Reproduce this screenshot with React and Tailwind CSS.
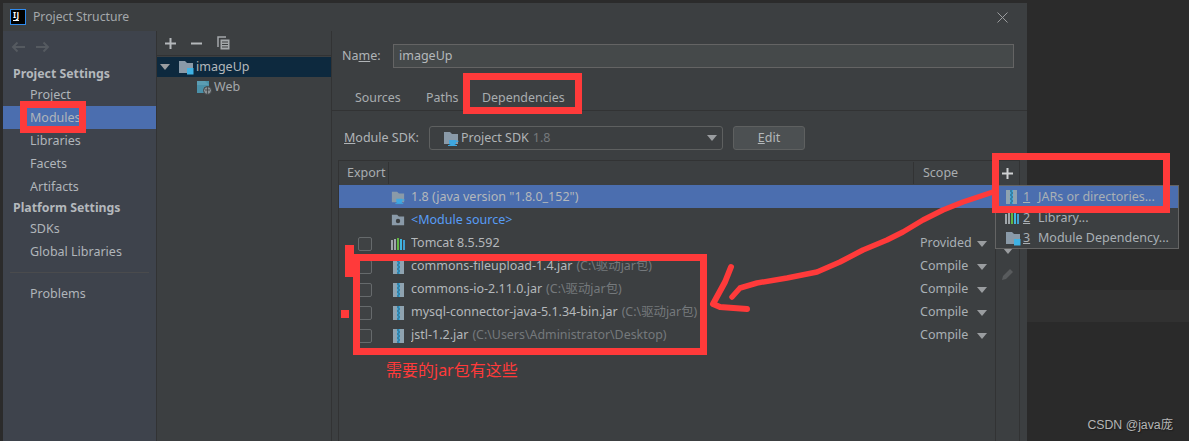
const FONT = "font-['Noto_Sans','Noto_Sans_CJK_SC',sans-serif]";

function FolderIcon({ className = "", badge }) {
  return (
    <svg width="16" height="15" viewBox="0 0 16 15" className={className}>
      <path d="M1 1h6l2 2h6v10H1z" fill="#8a9aa8" />
      {badge === "square" && <rect x="9" y="8" width="6.5" height="6.5" fill="#3fb2e4" />}
      {badge === "cup" && (
        <g fill="#3fa7e0">
          <path d="M6 9h7v3.2a1.8 1.8 0 0 1-1.8 1.8H7.8A1.8 1.8 0 0 1 6 12.2z" />
          <rect x="13" y="9.6" width="2.4" height="1.4" />
          <rect x="5" y="14" width="9" height="1" />
        </g>
      )}
      {badge === "dot" && <circle cx="8" cy="8" r="2.5" fill="#3c3f41" />}
    </svg>
  );
}

function WebIcon() {
  return (
    <svg width="15" height="15" viewBox="0 0 15 15" className="shrink-0">
      <path d="M0 1h12v12H0z" fill="#4a90a8" />
      <path d="M0 1h8l4 4H0z" fill="#5b9db3" />
      <circle cx="10.5" cy="10.5" r="4" fill="#8a9195" stroke="#3c3f41" />
      <path d="M8 10h5M10.5 7v7" stroke="#3c3f41" strokeWidth="0.8" />
    </svg>
  );
}

function JarIcon() {
  return (
    <svg width="13" height="14" viewBox="0 0 13 14" className="shrink-0">
      <rect x="1" y="0" width="4" height="14" fill="#8fa3b0" />
      <rect x="8" y="0" width="4" height="14" fill="#8fa3b0" />
      <rect x="5" y="0" width="3" height="14" fill="#3fa5d6" />
      <path d="M5 1h2M6 3h2M5 5h2M6 7h2M5 9h2M6 11h2M5 13h2" stroke="#2b5f7a" strokeWidth="1" />
    </svg>
  );
}

function LibIcon() {
  return (
    <svg width="14" height="14" viewBox="0 0 14 14" className="shrink-0">
      <rect x="0" y="3" width="2" height="10" fill="#a0a6aa" />
      <rect x="3" y="2" width="2" height="11" fill="#a0a6aa" />
      <rect x="6" y="1" width="2" height="12" fill="#62b543" />
      <rect x="9" y="2" width="2" height="11" fill="#40b6e0" />
      <rect x="12" y="3" width="2" height="10" fill="#40a0d0" />
    </svg>
  );
}

function Caret({ className = "" }) {
  return (
    <svg width="10" height="6" viewBox="0 0 10 6" className={className}>
      <path d="M0 0h10L5 6z" fill="#9a9da0" />
    </svg>
  );
}

function NavItem({ children, active }) {
  return (
    <div className={`h-[23px] flex items-center pl-[27px] pt-[2px] text-[12.5px] text-[#b0b5ba] ${active ? "bg-[#4b6eaf]" : ""}`}>
      {children}
    </div>
  );
}

function NavHead({ children, h }) {
  return (
    <div className={`${h} flex items-center pl-[10px] pt-[2px] text-[12.3px] font-bold text-[#b4b8bc]`}>{children}</div>
  );
}

function Row({ icon, name, path, scope, check = true, selected, nameClass = "text-[#b4b8bb]" }) {
  return (
    <div className={`h-[23px] pt-[2px] flex items-center text-[12.5px] ${selected ? "bg-[#4b6eaf]" : ""}`}>
      <div className="w-[19px] shrink-0" />
      <div className="w-[14px] shrink-0">
        {check && <div className="w-[14px] h-[14px] rounded-[2px] border border-[#666a6c] bg-[#3f4244]" />}
      </div>
      <div className="w-[19px] shrink-0" />
      <div className="w-[14px] shrink-0 flex justify-center">{icon}</div>
      <div className="flex-1 ml-[6px] whitespace-nowrap overflow-hidden">
        <span className={nameClass}>{name}</span>
        {path && <span className="text-[#75797c] ml-[4px] text-[12.4px]">{path}</span>}
      </div>
      <div className="w-[75px] shrink-0 flex items-center text-[#a9b0b5]">
        {scope && (
          <>
            <span className="w-[57px]">{scope}</span>
            <Caret />
          </>
        )}
      </div>
    </div>
  );
}

function MenuRow({ n, label, icon, selected }) {
  return (
    <div className={`flex items-center text-[12.5px] text-[#a9b0b5] ${selected ? "bg-[#4b6eaf] h-[22px]" : "h-[20.5px]"}`}>
      <div className="w-[27px] shrink-0 pl-[9px] flex">{icon}</div>
      <span className="underline w-[15px] shrink-0">{n}</span>
      <span className="whitespace-nowrap">{label}</span>
    </div>
  );
}

function RedBox({ className }) {
  return <div className={`absolute border-[7px] border-[#ff3a3a] ${className}`} />;
}

export default function App() {
  return (
    <div className={`relative w-[1189px] h-[441px] overflow-hidden bg-[#2b2b2b] flex ${FONT}`}>
      {/* Dialog */}
      <div className="ml-[3px] mt-[3px] w-[1024px] h-[438px] flex flex-col bg-[#3c3f41]">
        {/* Title bar */}
        <div className="h-[28px] shrink-0 flex items-center pl-[7px] pr-[19px]">
          <div className="w-[16px] h-[16px] bg-black border border-[#2f8bef] flex flex-col items-start pt-[1px] pl-[2px] leading-none shrink-0">
            <span className="text-white text-[8px] font-bold leading-[8px] tracking-[0.5px]">IJ</span>
            <span className="w-[6px] h-[1px] bg-white mt-[1px]" />
          </div>
          <span className="ml-[7px] text-[12.2px] text-[#a4a8ab]">Project Structure</span>
          <svg width="11" height="11" viewBox="0 0 11 11" className="ml-auto">
            <path d="M0.5 0.5l10 10M10.5 0.5l-10 10" stroke="#9b9d9f" strokeWidth="1" />
          </svg>
        </div>

        <div className="flex-1 flex min-h-0">
          {/* Sidebar */}
          <div className="w-[153px] shrink-0 bg-[#3e434c] border-r border-[#323334] box-content">
            <div className="h-[32px] flex items-center pl-[8px] gap-[11px]">
              <svg width="14" height="12" viewBox="0 0 14 12"><path d="M14 6H2M6.5 1.5L2 6l4.500 4.500" fill="none" stroke="#555a60" strokeWidth="2" /></svg>
              <svg width="14" height="12" viewBox="0 0 14 12"><path d="M0 6h12M7.500 1.500L12 6l-4.500 4.500" fill="none" stroke="#555a60" strokeWidth="2" /></svg>
            </div>
            <NavHead h="h-[20px]">Project Settings</NavHead>
            <NavItem>Project</NavItem>
            <NavItem active>Modules</NavItem>
            <NavItem>Libraries</NavItem>
            <NavItem>Facets</NavItem>
            <NavItem>Artifacts</NavItem>
            <NavHead h="h-[19px]">Platform Settings</NavHead>
            <NavItem>SDKs</NavItem>
            <NavItem>Global Libraries</NavItem>
            <div className="mt-[9px] mb-[9px] mx-[7px] h-px bg-[#4a4b4d]" />
            <NavItem>Problems</NavItem>
          </div>

          {/* Modules tree */}
          <div className="w-[174px] shrink-0 border-r border-[#323334] box-content">
            <div className="h-[24px] flex items-center pl-[8px] border-b border-[#323334] box-content">
              <svg width="11" height="11" viewBox="0 0 11 11"><path d="M5.500 0v11M0 5.500h11" stroke="#b4b8bb" strokeWidth="2" /></svg>
              <svg width="11" height="11" viewBox="0 0 11 11" className="ml-[15px]"><path d="M0 5.500h11" stroke="#b4b8bb" strokeWidth="2" /></svg>
              <svg width="13" height="14" viewBox="0 0 13 14" className="ml-[15px]">
                <path d="M1 11V1h8" fill="none" stroke="#a4a8ab" strokeWidth="1.500" />
                <rect x="3.500" y="3.500" width="9" height="10" fill="#a4a8ab" />
                <path d="M5 6h6M5 8.500h6M5 11h6" stroke="#3c3f41" strokeWidth="1" />
              </svg>
            </div>
            <div className="mt-[1px] h-[20px] bg-[#0d293e] flex items-center text-[12.5px] text-[#b4b8bb]">
              <Caret className="ml-[3px] w-[10px]" />
              <FolderIcon badge="square" className="ml-[8px]" />
              <span className="ml-[2px]">imageUp</span>
            </div>
            <div className="h-[20px] flex items-center pl-[40px] text-[12.5px] text-[#a4a8ab]">
              <WebIcon />
              <span className="ml-[2px]">Web</span>
            </div>
          </div>

          {/* Detail */}
          <div className="flex-1 min-w-0 flex flex-col">
            <div className="pt-[13px] pr-[13px] flex items-center text-[12.5px] text-[#b0b4b7]">
              <span className="pl-[10px] pt-[1px] w-[61px] shrink-0">Na<span className="underline">m</span>e:</span>
              <div className="flex-1 h-[24px] bg-[#45494a] border border-[#646464] flex items-center pl-[5px] text-[#b4b8bb]">imageUp</div>
            </div>
            <div className="h-[43px] border-b border-[#323334] flex items-end pb-[2px] pl-[23px] text-[12.4px] text-[#a9adb0] shrink-0">
              <span className="w-[71px]">Sources</span>
              <span className="w-[56px]">Paths</span>
              <span>Dependencies</span>
            </div>
            <div className="mt-[15px] flex items-center text-[12.5px] text-[#b0b4b7] shrink-0">
              <span className="pl-[12px] w-[97px] shrink-0"><span className="underline">M</span>odule SDK:</span>
              <div className="w-[294px] h-[24px] rounded-[3px] border border-[#5e6060] flex items-center pl-[13px] pr-[5px]">
                <FolderIcon badge="cup" />
                <span className="ml-[2px]">Project SDK</span>
                <span className="ml-[4px] text-[#75797c]">1.8</span>
                <Caret className="ml-auto" />
              </div>
              <div className="ml-[10px] w-[72px] h-[24px] rounded-[3px] border border-[#5e6060] bg-[#4c5052] flex items-center justify-center text-[#b4b8bb]">
                <span><span className="underline">E</span>dit</span>
              </div>
            </div>

            {/* Table */}
            <div className="mt-[10px] ml-[6px] mr-[7px] flex-1 min-h-0 flex border-l border-t border-[#323334]">
              <div className="flex-1 min-w-0 flex flex-col">
                <div className="h-[24px] flex items-center text-[12.5px] text-[#a9adb0] shrink-0">
                  <span className="w-[50px] pl-[8px] pt-[1px] border-r border-[#323334] h-[22px] flex items-center">Export</span>
                  <span className="flex-1 border-r border-[#323334] h-[22px]" />
                  <span className="w-[81px] pl-[9px] pt-[1px]">Scope</span>
                </div>
                <Row selected check={false} icon={<FolderIcon badge="cup" />} name="1.8 (java version &quot;1.8.0_152&quot;)" />
                <Row check={false} icon={<FolderIcon badge="dot" />} name="<Module source>" nameClass="text-[#589df6]" />
                <Row icon={<LibIcon />} name="Tomcat 8.5.592" scope="Provided" />
                <Row icon={<JarIcon />} name="commons-fileupload-1.4.jar" path="(C:\驱动jar包)" scope="Compile" />
                <Row icon={<JarIcon />} name="commons-io-2.11.0.jar" path="(C:\驱动jar包)" scope="Compile" />
                <Row icon={<JarIcon />} name="mysql-connector-java-5.1.34-bin.jar" path="(C:\驱动jar包)" scope="Compile" />
                <Row icon={<JarIcon />} name="jstl-1.2.jar" path="(C:\Users\Administrator\Desktop)" scope="Compile" />
              </div>
              {/* Toolbar */}
              <div className="w-[25px] shrink-0 border-l border-r border-[#323334] flex flex-col items-center">
                <svg width="11" height="11" viewBox="0 0 11 11" className="mt-[7px]"><path d="M5.500 0v11M0 5.500h11" stroke="#cfd1d3" strokeWidth="2" /></svg>
                <Caret className="mt-[69px]" />
                <svg width="13" height="14" viewBox="0 0 13 14" className="mt-[13px]">
                  <path d="M1 13l1-4 7-7 3 3-7 7z" fill="#585b5d" />
                </svg>
              </div>
            </div>
          </div>
        </div>
      </div>

      {/* Background on the right */}
      <div className="flex-1 flex flex-col">
        <div className="h-[290px] bg-[#2b2b2b]" />
        <div className="h-[32px] bg-[#313131]" />
        <div className="flex-1 bg-[#2a2a2a] flex items-end justify-end pb-[7px] pr-[16px]">
          <span className="text-[12.3px] text-[#b5b5b5] font-['Liberation_Sans','Noto_Sans_CJK_SC',sans-serif] [text-shadow:1px_1px_1px_#1c1c1c]">CSDN @java庞</span>
        </div>
      </div>

      {/* Popup menu */}
      <div className="absolute left-[995px] top-[185px] w-[184px] h-[64px] bg-[#3c3f41] border border-[#646464]">
        <MenuRow selected n="1" label="JARs or directories..." icon={<JarIcon />} />
        <MenuRow n="2" label="Library..." icon={<LibIcon />} />
        <MenuRow n="3" label="Module Dependency..." icon={<FolderIcon badge="square" />} />
      </div>

      {/* Red annotations */}
      <RedBox className="left-[20px] top-[101px] w-[66px] h-[32px]" />
      <RedBox className="left-[463px] top-[73px] w-[119px] h-[41px]" />
      <RedBox className="left-[353px] top-[254px] w-[354px] h-[101px]" />
      <RedBox className="left-[992px] top-[153px] w-[178px] h-[60px]" />
      <div className="absolute left-[345px] top-[245px] w-[9px] h-[32px] bg-[#ff3a3a]" />
      <div className="absolute left-[341px] top-[310px] w-[8px] h-[8px] bg-[#ff3a3a]" />
      <svg width="1189" height="441" viewBox="0 0 1189 441" className="absolute left-0 top-0 pointer-events-none">
        <path
          d="M993 192L963 202L943 210L923 220L903 232L887 240L863 250L840 262L817 272L787 278L757 283L740 288L732 297"
          fill="none" stroke="#ff3a3a" strokeWidth="5.500" strokeLinecap="round" strokeLinejoin="round"
        />
        <path
          d="M731 267L725 282L713 304L720 307L747 309"
          fill="none" stroke="#ff3a3a" strokeWidth="6" strokeLinecap="round" strokeLinejoin="round"
        />
      </svg>
      <span className="absolute left-[386px] top-[359px] text-[16px] leading-[22px] text-[#ff3a3a]">需要的jar包有这些</span>
    </div>
  );
}
